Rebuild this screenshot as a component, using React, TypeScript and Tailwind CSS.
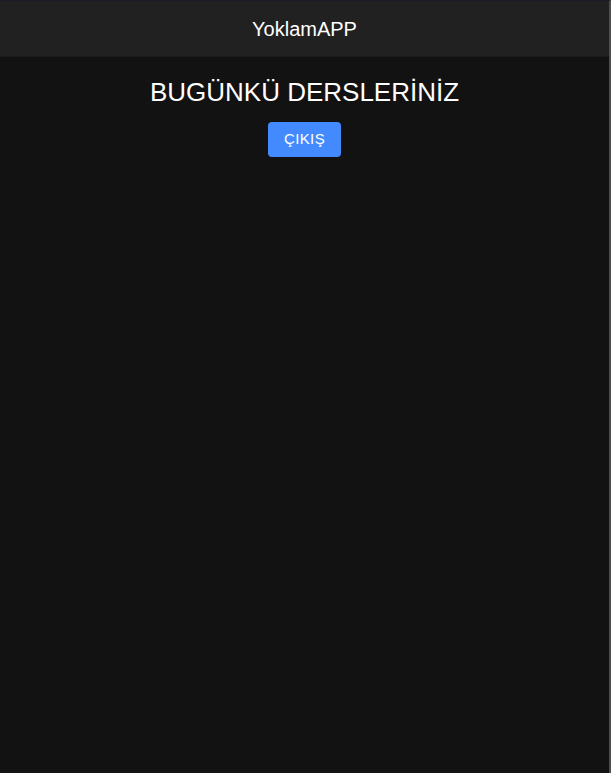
export default function App() {
  return (
    <div
      className="min-h-[773px] h-[773px] flex flex-col bg-[#121212] border-t border-[#1c1c28] border-r-2 border-r-[#4d4d4d] text-white"
      style={{ fontFamily: '"Liberation Sans", Arial, sans-serif' }}
    >
      <header className="h-[56px] shrink-0 flex items-center justify-center bg-[#212121] border-b border-[#1a1a1a]">
        <h1 className="text-[20px] leading-none">YoklamAPP</h1>
      </header>
      <main className="flex flex-col items-center pt-[20px]">
        <h2 className="text-[26px] leading-[30px]">BUGÜNKÜ DERSLERİNİZ</h2>
        <button className="mt-[15px] h-[35px] px-4 rounded bg-[#448aff] text-[15px] font-medium tracking-[0.4px] text-white">
          ÇIKIŞ
        </button>
      </main>
    </div>
  )
}
